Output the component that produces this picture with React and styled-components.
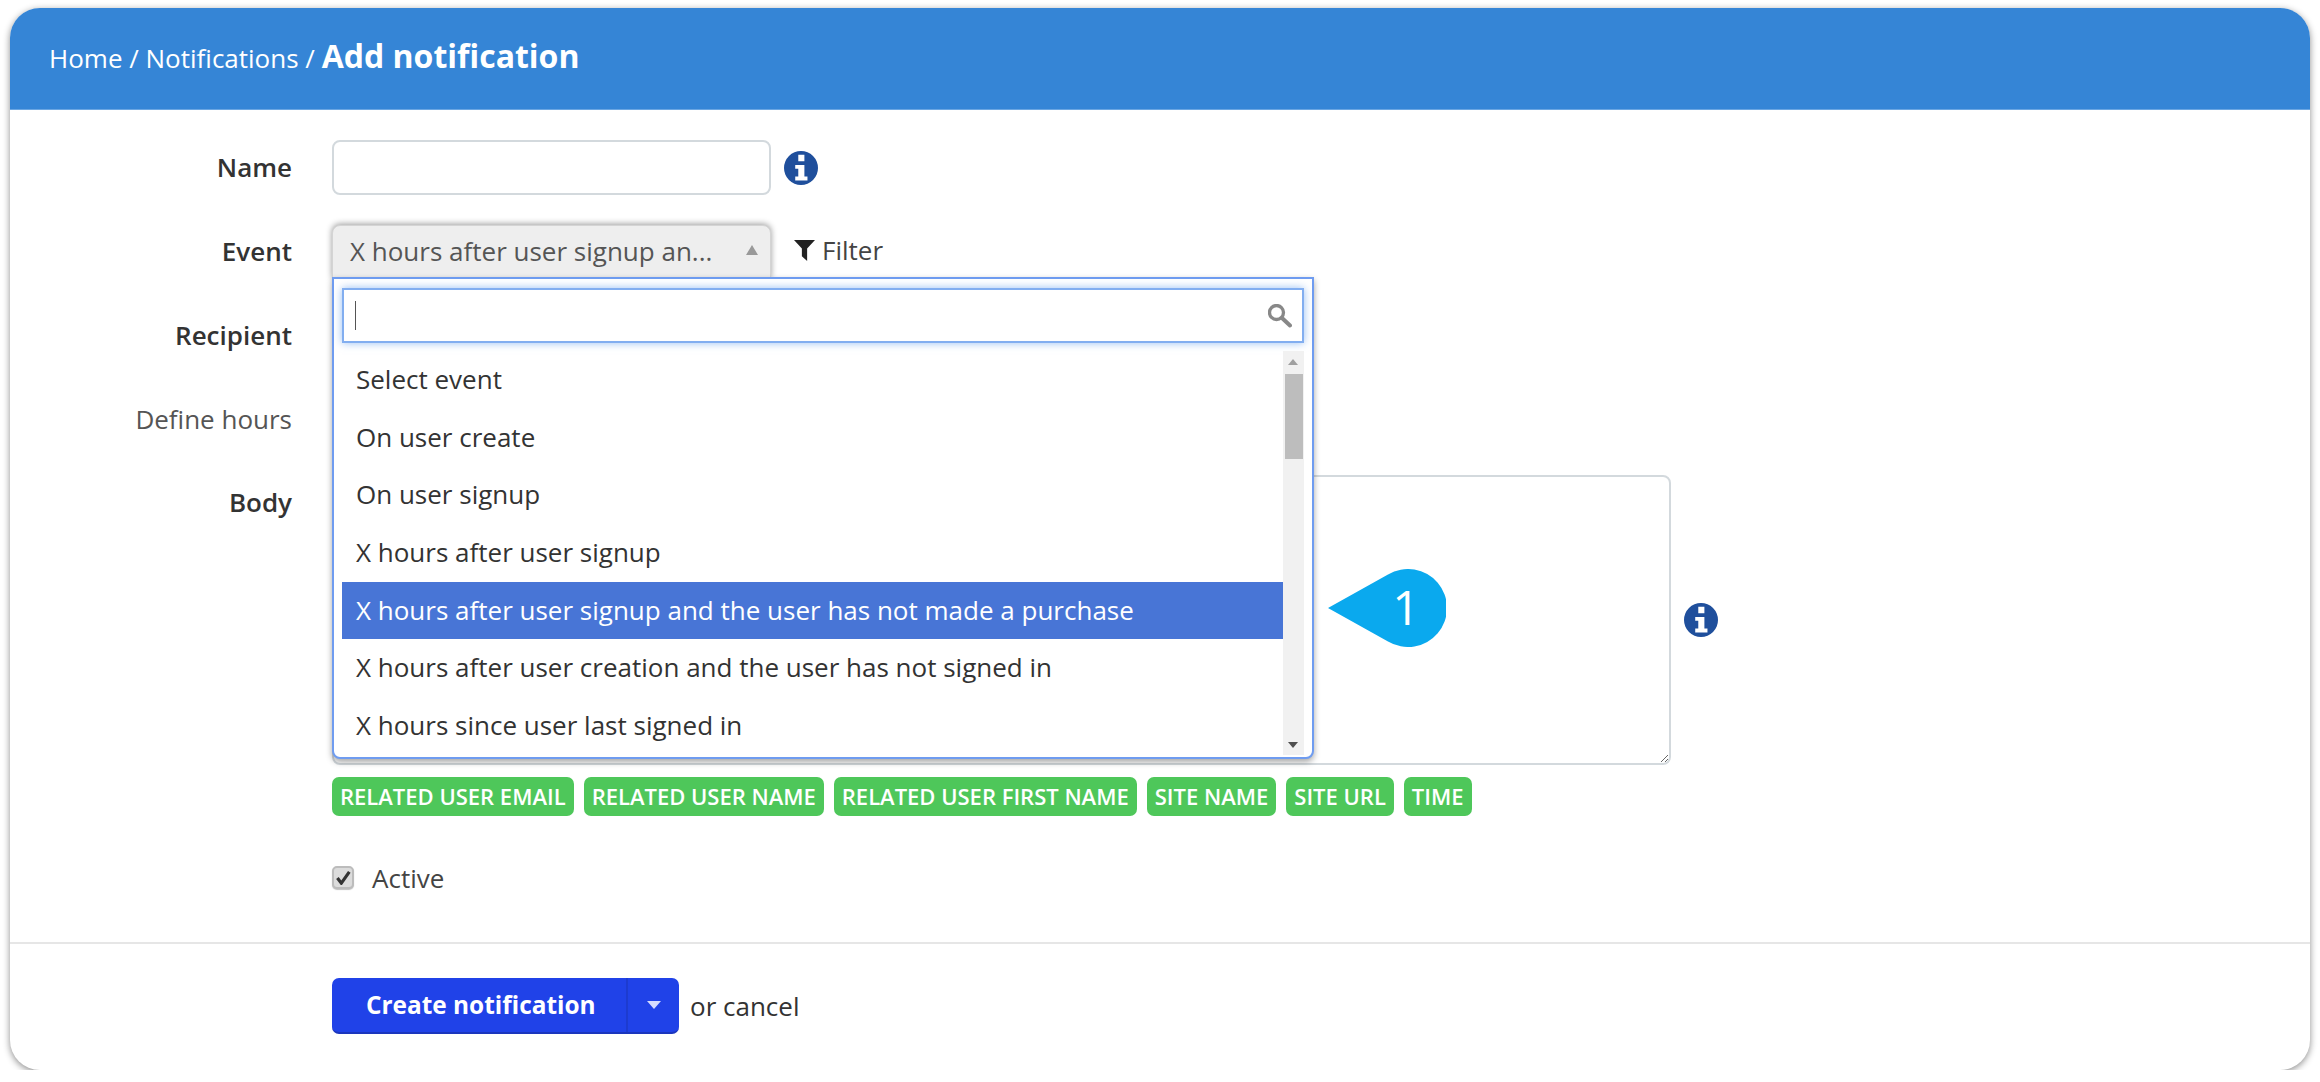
import React from 'react';
import styled, {createGlobalStyle} from 'styled-components';

const Global = createGlobalStyle`
html, body {
    margin: 0;
    padding: 0;
    background: #fff;
}
* {
    box-sizing: border-box;
}
`;

const Card = styled.div`
position: relative;
width: 2300px;
height: 1062px;
margin: 8px 0 0 10px;
background: #fff;
border-radius: 30px;
box-shadow: 0 2px 7px rgba(0, 0, 0, .45);
font-family: "Open Sans", sans-serif;
font-size: 26px;
color: #333;
`;

const Header = styled.div`
height: 102px;
padding: 28px 39px 0;
background: #3585d6;
border-bottom: 1px solid #6ba6e2;
border-radius: 30px 30px 0 0;
color: #fff;
font-size: 26px;
line-height: 40px;
`;

const Title = styled.strong`
font-size: 32px;
font-weight: 700;
`;

const Form = styled.div`
padding-top: 30px;
`;

const Row = styled.div`
display: grid;
grid-template-columns: 282px 1fr;
column-gap: 40px;
align-items: start;
height: ${p => p.$h}px;
margin-bottom: ${p => p.$gap || 0}px;
`;

const Label = styled.label`
display: block;
text-align: right;
line-height: ${p => p.$lh || 55}px;
font-size: 26px;
font-weight: ${p => p.$light ? 400 : 600};
color: ${p => p.$light ? '#555' : '#333'};
`;

const Field = styled.div`
display: flex;
align-items: center;
gap: 13px;
`;

const TextInput = styled.input`
width: 439px;
height: 55px;
border: 2px solid #d3d9dd;
border-radius: 8px;
background: #fff;
`;

const Select = styled.div`
position: relative;
width: 439px;
height: 54px;
padding-left: 17px;
background: #eee;
border: 1px solid #d4d4d4;
border-radius: 8px 8px 0 0;
box-shadow: 0 -1px 6px rgba(0, 0, 0, .4);
font-size: 26px;
line-height: 50px;
color: #555;
`;

const SelectArrow = styled.span`
position: absolute;
right: 12px;
top: 19px;
border-left: 6.5px solid transparent;
border-right: 6.5px solid transparent;
border-bottom: 10px solid #999;
`;

const FilterLink = styled.span`
display: flex;
align-items: center;
gap: 7px;
margin: 0 0 4px 10px;
font-size: 26px;
color: #444;
`;

const InfoSvg = styled.svg`
width: 34px;
height: 34px;
flex-shrink: 0;
`;

const TextArea = styled.textarea`
display: block;
width: 1339px;
height: 290px;
border: 2px solid #d3d9dd;
border-radius: 8px;
background: #fff;
`;

const Tags = styled.div`
display: flex;
gap: 10px;
margin: 12px 0 0 322px;
`;

const Tag = styled.span`
height: 39px;
padding: 0 8px;
background: #4ec75a;
border-radius: 7px;
color: #fff;
font-size: 22px;
font-weight: 600;
line-height: 39px;
white-space: nowrap;
`;

const ActiveLine = styled.label`
display: flex;
align-items: center;
gap: 18px;
margin: 50px 0 0 322px;
height: 23px;
color: #444;
`;

const CheckBox = styled.span`
display: flex;
align-items: center;
justify-content: center;
width: 22px;
height: 23px;
border: 2px solid #bcbcbc;
border-radius: 5px;
background: #dcdcdc;
box-shadow: 0 1px 1px rgba(0, 0, 0, .25);
svg {
    width: 15px;
    height: 15px;
}
`;

const Divider = styled.hr`
height: 2px;
margin: 53px 0 0;
border: 0;
background: #e6e6e6;
`;

const Actions = styled.div`
display: flex;
align-items: center;
gap: 11px;
margin: 34px 0 0 322px;
`;

const SplitButton = styled.div`
display: flex;
width: 347px;
height: 56px;
background: #2042e8;
border-bottom: 2px solid #1b36bd;
border-radius: 7px;
color: #fff;
`;

const MainButton = styled.span`
width: 296px;
padding-left: 34px;
border-right: 2px solid #1d3bd0;
font-size: 24.4px;
font-weight: 700;
line-height: 54px;
`;

const Caret = styled.span`
flex: 1;
display: flex;
align-items: center;
justify-content: center;
&::after {
    content: "";
    border-left: 7.5px solid transparent;
    border-right: 7.5px solid transparent;
    border-top: 8px solid #d5dcff;
}
`;

// open dropdown lies over the recipient, hours and body rows
const Dropdown = styled.div`
position: absolute;
left: 322px;
top: 269px;
width: 982px;
height: 482px;
padding: 9px 8px 0;
background: #fff;
border: 2px solid #6f9cf0;
border-radius: 0 0 8px 8px;
box-shadow: 0 3px 6px rgba(0, 0, 0, .35);
`;

const Search = styled.div`
display: flex;
align-items: center;
justify-content: space-between;
height: 55px;
padding: 0 10px 0 11px;
border: 2px solid #82aef0;
box-shadow: 0 0 8px rgba(82, 148, 236, .6);
`;

const Cursor = styled.span`
width: 1px;
height: 29px;
background: #555;
`;

const ListWrap = styled.div`
display: flex;
margin-top: 8px;
height: 404px;
`;

const List = styled.ul`
flex: 1;
margin: 0;
padding: 0;
list-style: none;
`;

const Item = styled.li`
height: 57.7px;
padding-left: 14px;
background: ${p => p.$selected ? '#4875d6' : 'transparent'};
color: ${p => p.$selected ? '#fff' : '#333'};
font-size: 26px;
line-height: 56px;
white-space: nowrap;
`;

const Scrollbar = styled.div`
position: relative;
width: 21px;
background: #f1f1f1;
`;

const ScrollThumb = styled.div`
position: absolute;
top: 23px;
left: 2px;
width: 18px;
height: 85px;
background: #bdbdbd;
`;

const ScrollArrow = styled.span`
position: absolute;
left: 5px;
${p => p.$down ? 'bottom: 7px;' : 'top: 8px;'}
border-left: 5px solid transparent;
border-right: 5px solid transparent;
${p => p.$down ? 'border-top: 6px solid #505050;' : 'border-bottom: 6px solid #a0a0a0;'}
`;

const Callout = styled.div`
position: absolute;
left: 1318px;
top: 561px;
width: 118px;
height: 78px;
`;

const CalloutNumber = styled.span`
position: absolute;
left: 60px;
top: 0;
width: 36px;
text-align: center;
color: #fff;
font-size: 48px;
font-weight: 400;
line-height: 76px;
`;

const events = [
    'Select event',
    'On user create',
    'On user signup',
    'X hours after user signup',
    'X hours after user signup and the user has not made a purchase',
    'X hours after user creation and the user has not signed in',
    'X hours since user last signed in'
];

const tags = ['RELATED USER EMAIL', 'RELATED USER NAME', 'RELATED USER FIRST NAME', 'SITE NAME', 'SITE URL', 'TIME'];

const Info = () => (
    <InfoSvg viewBox="0 0 100 100">
        <path
            fillRule="evenodd"
            fill="#1f4f9c"
            d="M50 0a50 50 0 1 0 0 100a50 50 0 1 0 0-100ZM42 11H60V30H42ZM33 41H60V75H69V87H33V75H42V52H33Z"/>
    </InfoSvg>
);

export default function App() {
    return (
        <Card>
            <Global/>
            <Header>Home / Notifications / <Title>Add notification</Title></Header>
            <Form>
                <Row $h={55} $gap={30}>
                    <Label>Name</Label>
                    <Field><TextInput/><Info/></Field>
                </Row>
                <Row $h={54} $gap={29}>
                    <Label $lh={53}>Event</Label>
                    <Field>
                        <Select>X hours after user signup an...<SelectArrow/></Select>
                        <FilterLink>
                            <svg width="21" height="21" viewBox="0 0 20 20">
                                <path d="M0 0H20L12.5 8V20L7.5 15.5V8Z" fill="#222"/>
                            </svg>
                            Filter
                        </FilterLink>
                    </Field>
                </Row>
                <Row $h={55} $gap={29}>
                    <Label>Recipient</Label>
                </Row>
                <Row $h={55} $gap={28}>
                    <Label $light>Define hours</Label>
                </Row>
                <Row $h={290}>
                    <Label>Body</Label>
                    <Field><TextArea/><Info/></Field>
                </Row>
                <Tags>{tags.map(t => <Tag key={t}>{t}</Tag>)}</Tags>
                <ActiveLine>
                    <CheckBox>
                        <svg viewBox="0 0 16 16"><path d="M1.5 8.5l4.2 5.5 8.5-12" fill="none" stroke="#333" strokeWidth="3.4"/></svg>
                    </CheckBox>
                    Active
                </ActiveLine>
                <Divider/>
                <Actions>
                    <SplitButton><MainButton>Create notification</MainButton><Caret/></SplitButton>
                    or cancel
                </Actions>
            </Form>
            <Dropdown>
                <Search>
                    <Cursor/>
                    <svg width="24" height="24" viewBox="0 0 24 24">
                        <circle cx="8.5" cy="8.5" r="7" fill="none" stroke="#888" strokeWidth="3.3"/>
                        <path d="M14 14l8 7.5" stroke="#888" strokeWidth="4" strokeLinecap="round"/>
                    </svg>
                </Search>
                <ListWrap>
                    <List>
                        {events.map((e, i) => <Item key={e} $selected={i === 4}>{e}</Item>)}
                    </List>
                    <Scrollbar>
                        <ScrollArrow/>
                        <ScrollThumb/>
                        <ScrollArrow $down/>
                    </Scrollbar>
                </ListWrap>
            </Dropdown>
            <Callout>
                <svg width="118" height="78" viewBox="0 0 118 78">
                    <path d="M0 39L60 5.5A39 39 0 1 1 60 72.5Z" fill="#0aa9ee"/>
                </svg>
                <CalloutNumber>1</CalloutNumber>
            </Callout>
        </Card>
    );
}
